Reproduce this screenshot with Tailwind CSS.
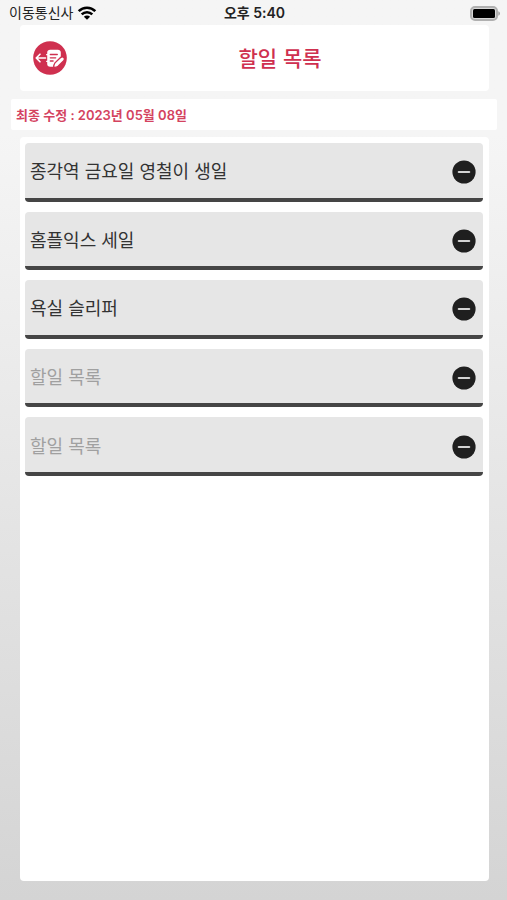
<!DOCTYPE html>
<html lang="ko">
<head>
<meta charset="utf-8">
<meta name="viewport" content="width=device-width, initial-scale=1">
<title>할일 목록</title>
<script src="https://cdn.jsdelivr.net/npm/@tailwindcss/browser@4"></script>
</head>
<body class="flex min-h-screen flex-col bg-linear-to-b from-[#f5f5f5] from-15% to-[#d4d4d4] pb-[19px] font-['Inter','Noto_Sans_CJK_KR',sans-serif] text-[#222]">
  <svg class="hidden" aria-hidden="true">
    <symbol id="minus" viewBox="0 0 24 24">
      <circle cx="12" cy="12" r="11.6" fill="#1f1f1f"/>
      <path d="M6.8 12h10.4" stroke="#d4d4d4" stroke-width="2.2" stroke-linecap="round"/>
    </symbol>
  </svg>

  <div class="grid h-[25px] grid-cols-3 items-center pt-px pr-[7px] pl-[9px]">
    <div class="flex items-center gap-1">
      <span class="text-[14px] leading-5 whitespace-nowrap">이동통신사</span>
      <svg class="h-[14px] w-[20px]" viewBox="0 0 20 14" fill="none" stroke="#000" aria-label="Wi-Fi">
        <path d="M1.7 5.2a11.8 11.8 0 0 1 16.6 0" stroke-width="2.6"/>
        <path d="M4.7 8.4a7.5 7.5 0 0 1 10.6 0" stroke-width="2.5"/>
        <path d="M10 13.8 6.9 10.7a4.4 4.4 0 0 1 6.2 0Z" fill="#000" stroke="none"/>
      </svg>
    </div>
    <time class="text-center text-[14px] leading-5 font-semibold whitespace-nowrap">오후 5:40</time>
    <svg class="h-[15px] w-[30px] justify-self-end" viewBox="0 0 30 15" aria-label="배터리">
      <rect x="1" y="1" width="26" height="13" rx="4" fill="#d8d8d8" stroke="#b0b0b0" stroke-width="2"/>
      <rect x="3" y="3" width="22" height="9" rx="1.5" fill="#000"/>
      <path d="M28.3 5.3a2.3 2.3 0 0 1 0 4.4Z" fill="#a0a0a0"/>
    </svg>
  </div>

  <header class="mr-[18px] ml-5 flex h-[66px] items-center rounded bg-white pl-[13px]">
    <button type="button" class="size-[34px]" aria-label="뒤로">
      <svg class="size-[34px]" viewBox="0 0 34 34" fill="none" stroke-linecap="round" stroke-linejoin="round">
        <circle cx="17" cy="17" r="16.8" fill="#cf304f"/>
        <path d="M12.5 17H3.2M7 13.2 3.2 17 7 20.8" stroke="#fff" stroke-width="1.6"/>
        <path d="M17.2 8.7h7.6c1.8 0 3 1 3 2.7v4L21.5 22l-1.4 3.8h-2.9c-1.8 0-3-1-3-2.7V11.4c0-1.7 1.2-2.7 3-2.7Z" fill="#fff"/>
        <path d="M13.6 13.7h2.2M13.6 20.3h2.2" stroke="#fff" stroke-width="1.2"/>
        <path d="M17.3 13.5h7M17.3 16.8h5.4M17.3 20h2.8" stroke="#cf304f" stroke-width="1.3"/>
        <path d="m22 21.9 5.4-5.2c2.6-2 5.2.5 3.3 3.1L25 25.3c-1.3 1-2.8 1.3-4.2 1.1-.1-1.6.2-3.2 1.2-4.5Z" fill="#fff" stroke="#cf304f" stroke-width="1.2"/>
      </svg>
    </button>
    <h1 class="flex-1 pb-[2px] pl-1 text-center font-['Noto_Sans_CJK_KR',sans-serif] text-[21px] leading-8 font-medium text-[#cf304f]">할일 목록</h1>
  </header>

  <p class="mr-[10px] ml-[11px] mt-2 flex h-[31px] items-center rounded-xs bg-white px-[5px] text-[13px] leading-5 font-semibold text-[#d4435f]">최종 수정 : 2023년 05월 08일</p>

  <main class="mt-[7px] mr-[18px] ml-5 flex-1 rounded bg-white pt-[6px] pr-[6px] pl-[5px] text-[#333]">
    <ul class="grid h-[333px] grid-rows-5 gap-[10px]">
      <li class="flex items-center rounded border-b-4 border-[#454545] bg-[#e6e6e6] pt-1 pr-[7px] pl-[5px]">
        <input type="text" aria-label="할일 1" placeholder="할일 목록" value="종각역 금요일 영철이 생일" class="min-w-0 flex-1 text-[18px] leading-7 outline-none placeholder:text-[#a0a0a0]">
        <button type="button" class="size-6" aria-label="할일 1 삭제"><svg class="size-6"><use href="#minus"/></svg></button>
      </li>
      <li class="flex items-center rounded border-b-4 border-[#454545] bg-[#e6e6e6] pt-1 pr-[7px] pl-[5px]">
        <input type="text" aria-label="할일 2" placeholder="할일 목록" value="홈플익스 세일" class="min-w-0 flex-1 text-[18px] leading-7 outline-none placeholder:text-[#a0a0a0]">
        <button type="button" class="size-6" aria-label="할일 2 삭제"><svg class="size-6"><use href="#minus"/></svg></button>
      </li>
      <li class="flex items-center rounded border-b-4 border-[#454545] bg-[#e6e6e6] pt-1 pr-[7px] pl-[5px]">
        <input type="text" aria-label="할일 3" placeholder="할일 목록" value="욕실 슬리퍼" class="min-w-0 flex-1 text-[18px] leading-7 outline-none placeholder:text-[#a0a0a0]">
        <button type="button" class="size-6" aria-label="할일 3 삭제"><svg class="size-6"><use href="#minus"/></svg></button>
      </li>
      <li class="flex items-center rounded border-b-4 border-[#454545] bg-[#e6e6e6] pt-1 pr-[7px] pl-[5px]">
        <input type="text" aria-label="할일 4" placeholder="할일 목록" class="min-w-0 flex-1 text-[18px] leading-7 outline-none placeholder:text-[#a0a0a0]">
        <button type="button" class="size-6" aria-label="할일 4 삭제"><svg class="size-6"><use href="#minus"/></svg></button>
      </li>
      <li class="flex items-center rounded border-b-4 border-[#454545] bg-[#e6e6e6] pt-1 pr-[7px] pl-[5px]">
        <input type="text" aria-label="할일 5" placeholder="할일 목록" class="min-w-0 flex-1 text-[18px] leading-7 outline-none placeholder:text-[#a0a0a0]">
        <button type="button" class="size-6" aria-label="할일 5 삭제"><svg class="size-6"><use href="#minus"/></svg></button>
      </li>
    </ul>
  </main>
</body>
</html>
